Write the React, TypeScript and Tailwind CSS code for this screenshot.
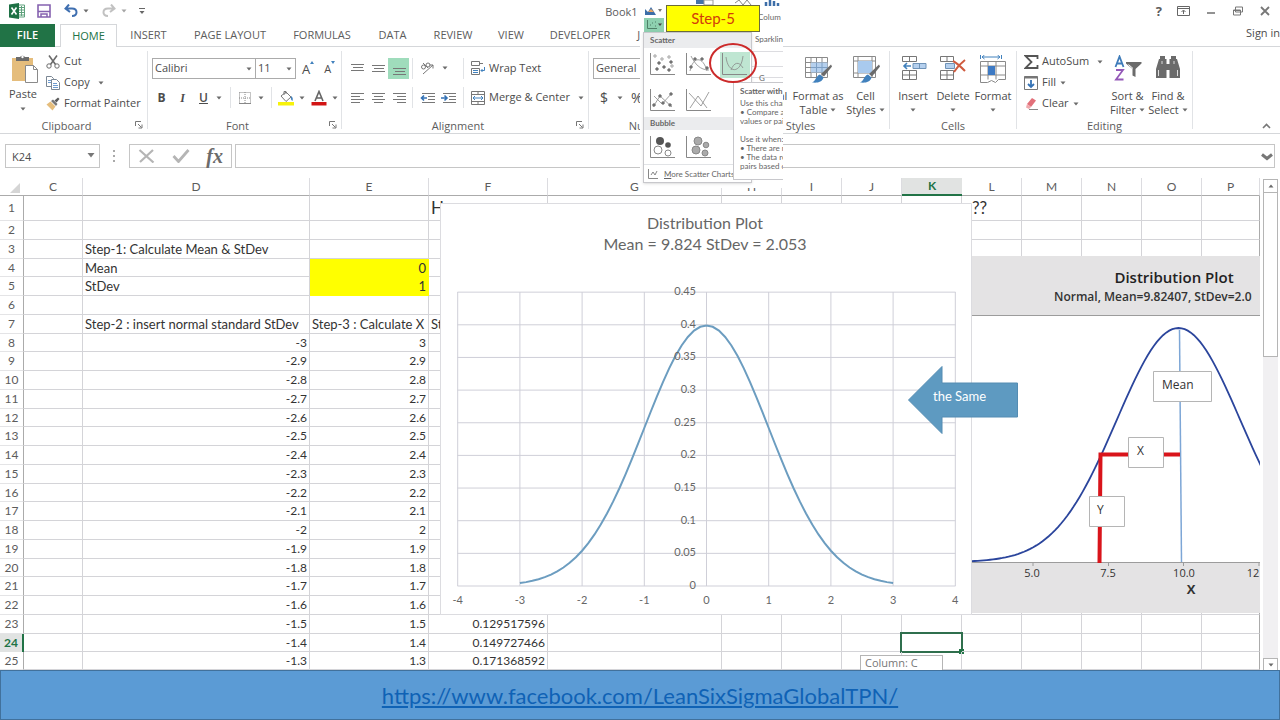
import React from "react";

const pdf = (z: number) => Math.exp((-z * z) / 2) / Math.sqrt(2 * Math.PI);

const Caret = ({ className = "" }) => (
  <svg viewBox="0 0 6 4" className={`w-[6px] h-1 shrink-0 ${className}`}>
    <path d="M0.5 0.5h5L3 3.5z" fill="#6b6b6b" />
  </svg>
);

const Launcher = () => (
  <svg viewBox="0 0 8 8" className="w-2 h-2" fill="none" stroke="#777">
    <path d="M0.5 5V0.5H6M3 3l3.500 3.500M7 3.500V7H3.500" />
  </svg>
);

/* ---------- Ribbon building blocks ---------- */

const Group = ({ label, width, launcher = false, children }) => (
  <section className={`relative flex flex-col shrink-0 my-1 border-r border-[#e1e3e6] ${width}`} aria-label={label}>
    <div className="h-[67px] shrink-0">{children}</div>
    <div className={`shrink-0 text-center text-[11px] leading-4 text-[#5c5c5c] ${launcher ? "pr-3.5" : ""}`}>{label}</div>
    {launcher && (
      <button aria-label={`${label} settings`} className="absolute right-1 bottom-0 leading-none">
        <Launcher />
      </button>
    )}
  </section>
);

const BigButton = ({ icon, lines, width }) => (
  <button className={`flex flex-col items-center shrink-0 pt-1 ${width}`}>
    {icon}
    <span className="mt-[3px] text-[11px] leading-[15px] whitespace-nowrap">{lines[0]}</span>
    <span className="flex items-center justify-center gap-[3px] h-[14px] text-[11px] leading-[14px] whitespace-nowrap">
      {lines[1]}
      <Caret />
    </span>
  </button>
);

const SmallButton = ({ icon, label, caret = "" }) => (
  <button className="flex items-center h-[21px] text-[11px] whitespace-nowrap">
    <span className="w-[18px] shrink-0">{icon}</span>
    {label}
    {caret && <Caret className={caret} />}
  </button>
);

const Lines = ({ rows, label }) => (
  <button aria-label={label} className="w-[21px] h-[21px] flex items-center justify-center shrink-0">
    <svg viewBox="0 0 14 14" className="w-[14px] h-[14px]" stroke="#777">
      {rows.map(([x1, x2, y]) => (
        <path key={y} d={`M${x1} ${y}H${x2}`} />
      ))}
    </svg>
  </button>
);

const Rule = () => <span className="block w-px h-[21px] bg-[#e1e3e6]" />;

/* ---------- Icons ---------- */

const PasteIcon = () => (
  <svg viewBox="0 0 28 30" className="w-7 h-[30px] ml-1">
    <path d="M1 4h21v23H1z" fill="#e5bd7c" />
    <path d="M5 7V3h4a3 3 0 0 1 5 0h4v4z" fill="#6b6b6b" />
    <circle cx="11.500" cy="3" r="1.200" fill="#fff" />
    <path d="M14.500 11.500h8l4 4V28.500h-12z" fill="#fff" stroke="#8a8a8a" />
    <path d="M22.500 11.500v4h4" fill="none" stroke="#8a8a8a" />
  </svg>
);

const CutIcon = () => (
  <svg viewBox="0 0 14 14" className="w-[14px] h-[14px]" fill="none" stroke="#6b6b6b">
    <path d="M3 0.500l6.500 9M11 0.500l-6.500 9" strokeWidth="1.600" />
    <circle cx="3" cy="11" r="2.200" />
    <circle cx="11" cy="11" r="2.200" />
  </svg>
);

const CopyIcon = () => (
  <svg viewBox="0 0 14 14" className="w-[14px] h-[14px]" fill="#fff" stroke="#7b8794">
    <path d="M0.500 0.500h5l2 2v8h-7z" />
    <path d="M5.500 3.500h5l3 3v7h-8z" />
    <path d="M2 4.500h3M2 6.500h3M7 7.500h4M7 9.500h5M7 11.500h5" stroke="#6d9bd0" />
  </svg>
);

const PainterIcon = () => (
  <svg viewBox="0 0 14 14" className="w-[14px] h-[14px]">
    <path d="M0.500 7.500l4-3 5 5-3 4z" fill="#e5bd7c" />
    <path d="M5 4l2-1.500 4.500 4.500-1.500 2z" fill="#777" />
    <path d="M8.500 3.500l3.500-3 1.500 1.500-3 3.500z" fill="#5c5c5c" />
  </svg>
);

const Brush = () => (
  <>
    <path d="M27 9.500l1 2-8 10-3-2.500z" fill="#6b6b6b" />
    <path d="M16 19.500l3.500 3c-1.500 5-6 5.500-11.500 5 4-1.500 4-7 8-8z" fill="#4181bd" />
  </>
);

const TableIcon = () => (
  <svg viewBox="0 0 28 30" className="w-7 h-[30px]">
    <path d="M1.500 2.500h22v20h-22zM1.500 7.500h22M1.500 12.500h22M1.500 17.500h22M7 2.500v20M12.500 2.500v20M18 2.500v20" fill="#fff" stroke="#8a8a8a" />
    <path d="M7 7.500h16.500v10H7z" fill="#b5d0ee" />
    <path d="M7 12.500h16.500M12.500 7.500v10M18 7.500v10" stroke="#7d9fc4" />
    <Brush />
  </svg>
);

const StylesIcon = () => (
  <svg viewBox="0 0 28 30" className="w-7 h-[30px]">
    <path d="M1.500 1.500h22v21h-22zM1.500 6h22M1.500 18h22M6 1.500v21M20 1.500v21" fill="#fff" stroke="#8a8a8a" />
    <path d="M6 6h14v12H6z" fill="#a9caee" />
    <Brush />
  </svg>
);

const InsertIcon = () => (
  <svg viewBox="0 0 28 30" className="w-7 h-[30px]" stroke="#777" fill="#fff">
    <path d="M3.500 1.500h14v5h-14zM10.500 1.500v5M3.500 15.500h14v9h-14zM3.500 20h14M10.500 15.500v9" />
    <path d="M14 8.500h13v5H14zM20.500 8.500v5" fill="#b5d0ee" stroke="#6f93b8" />
    <path d="M12 11H5M8 8l-3 3 3 3" stroke="#4181bd" strokeWidth="1.600" fill="none" />
  </svg>
);

const DeleteIcon = () => (
  <svg viewBox="0 0 28 30" className="w-7 h-[30px]" stroke="#777" fill="#fff">
    <path d="M1.500 1.500h13v5h-13zM8 1.500v5M1.500 15.500h13v9h-13zM1.500 20h13M8 15.500v9" />
    <path d="M6.500 8.500h9v5h-9z" fill="#b5d0ee" stroke="#6f93b8" />
    <path d="M14 6c4 2 8 6 12 10M26 5c-4 3-8 7-11 12" stroke="#cf5b3f" strokeWidth="2" fill="none" />
  </svg>
);

const FormatIcon = () => (
  <svg viewBox="0 0 28 30" className="w-7 h-[30px]" stroke="#8a8a8a" fill="#fff">
    <path d="M1.500 0v4M22.500 0v4M3 2h18M5.500 0l-2.500 2 2.500 2M18.500 0l2.500 2-2.500 2" stroke="#4181bd" fill="none" />
    <path d="M1.500 6.500h25v18h-7l-3 3-4-2-4 2h-7zM1.500 11h25M1.500 20h25M9 6.500v18M17 6.500v18" />
    <path d="M9 11h7v9H9z" fill="#3d7ac4" stroke="none" />
  </svg>
);

const SortIcon = () => (
  <svg viewBox="0 0 28 30" className="w-7 h-[30px]" fill="none">
    <path d="M1.500 12L5.500 1.500l4 10.500M3 8.500h5.500" stroke="#3f7cba" strokeWidth="1.800" />
    <path d="M2 15h7l-7 9.500h7.500" stroke="#9458b8" strokeWidth="1.800" />
    <path d="M12 7h15.500v1.500L21.500 14v8l-3-1.500V14L12 8.500z" fill="#6b6b6b" />
    <path d="M14.500 9.500l4.500 4" stroke="#fff" />
  </svg>
);

const FindIcon = () => (
  <svg viewBox="0 0 28 30" className="w-7 h-[30px]" fill="#6b6b6b">
    <path d="M6 1h5v3h1.500v19H2v-9l3-10h1zM17 1h5v3h1l3 10v9H15.500V4H17zM12 9h4v6h-4z" />
    <path d="M4.500 15v6M23.500 15v6M8 6v3M20 6v3" stroke="#ddd" />
  </svg>
);

/* ---------- Top of the window ---------- */

const TitleBar = () => (
  <header className="flex items-center h-6 text-[#5c5c5c]">
    <div className="flex items-center pl-[9px] pb-[3px]">
      <svg viewBox="0 0 16 16" className="w-4 h-4">
        <path d="M8 2h7.500v12H8z" fill="#fff" stroke="#5fa17c" />
        <path d="M10 4.500h5M10 7h5M10 9.500h5M10 12h5M12.500 3v10" stroke="#5fa17c" />
        <path d="M0 1.500L10 0v16L0 14.500z" fill="#1e7145" />
        <path d="M2.500 4.500l5 7M7.500 4.500l-5 7" stroke="#fff" strokeWidth="1.600" />
      </svg>
      <button aria-label="Save" className="ml-3">
        <svg viewBox="0 0 14 14" className="w-[14px] h-[14px]">
          <path d="M1 1h12v12H1z" fill="#fff" stroke="#8561b0" strokeWidth="1.600" />
          <path d="M1 7.500h12M4 13v-3h6v3" stroke="#8561b0" strokeWidth="1.500" fill="none" />
        </svg>
      </button>
      <button aria-label="Undo" className="flex items-center ml-[13px] gap-[5px]">
        <svg viewBox="0 0 14 13" className="w-[14px] h-[13px]" fill="none" stroke="#3f6fb0" strokeWidth="2">
          <path d="M5 0.500L1.500 4.500 6 8M2 4.500h6c6 0 6 7.500 0 7.500" />
        </svg>
        <Caret />
      </button>
      <button aria-label="Redo" className="flex items-center ml-[13px] gap-[5px] opacity-60">
        <svg viewBox="0 0 14 13" className="w-[14px] h-[13px]" fill="none" stroke="#999" strokeWidth="2">
          <path d="M9 0.500l3.500 4L8 8M12 4.500H6c-6 0-6 7.500 0 7.500" />
        </svg>
        <Caret />
      </button>
      <button aria-label="Customize toolbar" className="ml-3">
        <svg viewBox="0 0 6 8" className="w-[6px] h-2">
          <path d="M0 1.500h6" stroke="#666" />
          <path d="M0.500 4h5L3 7z" fill="#666" />
        </svg>
      </button>
    </div>
    <h1 className="flex-1 text-center text-[11px] pr-[58px]">Book1</h1>
    <div className="flex items-center gap-[15px] pr-[9px] pb-[3px]">
      <button className="text-[13px] leading-4 font-bold">?</button>
      <button aria-label="Ribbon display options">
        <svg viewBox="0 0 13 10" className="w-[13px] h-[10px]" fill="none" stroke="#666">
          <path d="M0.500 0.500h12v9H0.500zM0.500 2.500h12M6.500 8V4.500M4.500 6l2-2 2 2" />
        </svg>
      </button>
      <button aria-label="Minimize">
        <svg viewBox="0 0 12 10" className="w-3 h-[10px]">
          <path d="M2 7h8" stroke="#777" strokeWidth="1.600" />
        </svg>
      </button>
      <button aria-label="Restore">
        <svg viewBox="0 0 12 10" className="w-3 h-[10px]" fill="#fff" stroke="#777">
          <path d="M3.500 1h7v5h-7zM1.500 4h7v5h-7zM1.500 4.500h7" />
        </svg>
      </button>
      <button aria-label="Close">
        <svg viewBox="0 0 12 10" className="w-3 h-[10px]" stroke="#777" strokeWidth="1.800">
          <path d="M2 1l8 8M10 1l-8 8" />
        </svg>
      </button>
    </div>
  </header>
);

const tabs = [
  ["INSERT", "w-[63px]"],
  ["PAGE LAYOUT", "w-[100px]"],
  ["FORMULAS", "w-[84px]"],
  ["DATA", "w-[57px]"],
  ["REVIEW", "w-[64px]"],
  ["VIEW", "w-[52px]"],
  ["DEVELOPER", "w-[86px]"],
  ["JMP", "w-[48px]"],
];

const TabRow = () => (
  <nav className="flex h-[23px] border-b border-[#d5d7da] text-[11px] text-[#5c5c5c]">
    <button className="w-[55px] h-[23px] bg-[#217346] text-white font-semibold">FILE</button>
    <button className="w-[57px] h-[23px] ml-[5px] bg-white border border-b-0 border-[#d5d7da] text-[#217346]">HOME</button>
    {tabs.map(([name, width]) => (
      <button key={name} className={`shrink-0 whitespace-nowrap ${width}`}>
        {name}
      </button>
    ))}
    <a href="#signin" className="ml-auto leading-[18px] whitespace-nowrap text-[#4c4c4c]">
      Sign in
    </a>
  </nav>
);

const Ribbon = () => (
  <div className="flex h-[87px] border-b border-[#d5d7da] text-[#4c4c4c]">
    <Group label="Clipboard" width="w-[148px]" launcher>
      <div className="flex">
        <button className="flex flex-col items-center shrink-0 w-[46px] pt-[3px]">
          <PasteIcon />
          <span className="text-[11px] leading-[15px] mt-0.5">Paste</span>
          <Caret className="mt-1.5" />
        </button>
        <div className="flex flex-col">
          <SmallButton icon={<CutIcon />} label="Cut" />
          <SmallButton icon={<CopyIcon />} label="Copy" caret="ml-2" />
          <SmallButton icon={<PainterIcon />} label="Format Painter" />
        </div>
      </div>
    </Group>

    <Group label="Font" width="w-[194px]" launcher>
      <div className="flex items-center pl-1 pt-[7px]">
        <label className="relative">
          <select aria-label="Font name" className="appearance-none block w-[104px] h-[21px] border border-[#ababab] bg-white pl-0.5 text-[11px]">
            <option>Calibri</option>
          </select>
          <Caret className="absolute right-1 top-[9px]" />
        </label>
        <label className="relative">
          <select aria-label="Font size" className="appearance-none block w-[40px] h-[21px] border border-l-0 border-[#ababab] bg-white pl-0.5 text-[11px]">
            <option>11</option>
          </select>
          <Caret className="absolute right-1 top-[9px]" />
        </label>
        <button aria-label="Grow font" className="flex ml-1.5 text-[13px] leading-4">
          A<svg viewBox="0 0 4 3" className="w-1 h-[3px]"><path d="M0 3h4L2 0z" fill="#4181bd" /></svg>
        </button>
        <button aria-label="Shrink font" className="flex ml-2.5 text-[11px] leading-4">
          A<svg viewBox="0 0 4 3" className="w-1 h-[3px]"><path d="M0 0h4L2 3z" fill="#4181bd" /></svg>
        </button>
      </div>
      <div className="flex items-center pl-[9px] pt-2 h-[29px] text-xs">
        <button className="w-[9px] font-bold">B</button>
        <button className="w-[9px] ml-3 italic font-['Liberation_Serif',serif] font-bold">I</button>
        <button className="w-[9px] ml-3 underline font-semibold">U</button>
        <Caret className="ml-2 mr-2" />
        <Rule />
        <button aria-label="Borders" className="ml-2">
          <svg viewBox="0 0 12 12" className="w-3 h-3" stroke="#888" fill="none">
            <path d="M0.500 0.500h11v11M0.500 0.500v11M6 0v12M0 6h12" strokeDasharray="1 1" />
            <path d="M0 11.500h12" />
          </svg>
        </button>
        <Caret className="ml-[7px] mr-[7px]" />
        <Rule />
        <button aria-label="Fill color" className="ml-1.5">
          <svg viewBox="0 0 16 16" className="w-4 h-4">
            <path d="M3 6l5-4 5 5-5 4.500z" fill="#fff" stroke="#777" />
            <path d="M6 5V1.500h2V4" fill="none" stroke="#777" />
            <path d="M13 6c2 1 2 3 1.500 5-1.500-1-2-2-1.500-5z" fill="#4181bd" />
            <path d="M0 12h16v3.500H0z" fill="#f7f20a" />
          </svg>
        </button>
        <Caret className="ml-[5px]" />
        <button aria-label="Font color" className="ml-1.5">
          <svg viewBox="0 0 16 16" className="w-4 h-4">
            <path d="M4 11L8 1.500 12 11M5.500 8h5" fill="none" stroke="#666" strokeWidth="1.600" />
            <path d="M0.500 12h15v3.500h-15z" fill="#d21414" />
          </svg>
        </button>
        <Caret className="ml-[5px]" />
      </div>
    </Group>

    <Group label="Alignment" width="w-[247px]" launcher>
      <div className="flex items-center pl-1 pt-1.5 h-7">
        <Lines label="Top align" rows={[[1, 14, 3.5], [3, 13, 6.5], [1, 14, 9.5]]} />
        <Lines label="Middle align" rows={[[1, 14, 4.5], [3, 13, 7.5], [1, 14, 10.5]]} />
        <div className="bg-[#9fdcbc]">
          <Lines label="Bottom align" rows={[[1, 14, 7.5], [3, 13, 10.5], [1, 14, 13.5]]} />
        </div>
        <span className="ml-[3px]"><Rule /></span>
        <button aria-label="Orientation" className="flex items-center gap-1.5 ml-[7px]">
          <svg viewBox="0 0 16 14" className="w-4 h-[14px]" fill="none" stroke="#777">
            <path d="M3 13L13 4M13 4h-3.500M13 4v3.500" />
            <circle cx="3.500" cy="6" r="2" />
            <path d="M3 2l5 5" />
            <circle cx="8" cy="4" r="2" />
          </svg>
          <Caret />
        </button>
        <span className="ml-[15px]"><Rule /></span>
        <button className="flex items-center ml-1.5 gap-[3px] text-[11px] whitespace-nowrap">
          <svg viewBox="0 0 16 14" className="w-4 h-[14px]" fill="none" stroke="#777">
            <path d="M1.500 0.500h8v4h-8zM1.500 7.500h8v6h-8zM9 2.500h4" />
            <path d="M3 9.500h5M3 11.500h5M14.500 6v3.500H11M12.500 8L11 9.500l1.500 1.500" stroke="#4181bd" />
          </svg>
          Wrap Text
        </button>
      </div>
      <div className="flex items-center pl-1 pt-2 h-[29px]">
        <Lines label="Align left" rows={[[1, 14, 2.5], [1, 10, 5.5], [1, 14, 8.5], [1, 10, 11.5]]} />
        <Lines label="Center" rows={[[1, 14, 2.5], [3, 12, 5.5], [1, 14, 8.5], [3, 12, 11.5]]} />
        <Lines label="Align right" rows={[[1, 14, 2.5], [5, 14, 5.5], [1, 14, 8.5], [5, 14, 11.5]]} />
        <span className="ml-[3px]"><Rule /></span>
        <button aria-label="Decrease indent" className="ml-[7px]">
          <svg viewBox="0 0 16 12" className="w-4 h-3" stroke="#777" fill="none">
            <path d="M2 1.500h13M8 4.500h7M8 7.500h7M2 10.500h13" />
            <path d="M7 6H1.500M4 3.500L1.500 6 4 8.500" stroke="#3472b5" strokeWidth="1.600" />
          </svg>
        </button>
        <button aria-label="Increase indent" className="ml-[5px]">
          <svg viewBox="0 0 16 12" className="w-4 h-3" stroke="#777" fill="none">
            <path d="M2 1.500h13M8 4.500h7M8 7.500h7M2 10.500h13" />
            <path d="M0 6h6M3.500 3.500L6 6 3.500 8.500" stroke="#3472b5" strokeWidth="1.600" />
          </svg>
        </button>
        <span className="ml-1.5"><Rule /></span>
        <button className="flex items-center ml-1.5 text-[11px] whitespace-nowrap">
          <svg viewBox="0 0 16 14" className="w-4 h-[14px] mr-[3px]" fill="none" stroke="#777">
            <path d="M1.500 0.500h13v13h-13zM1.500 3.500h13M1.500 10.500h13M8 0.500v3M8 10.500v3" />
            <path d="M3 7h10M5 5L3 7l2 2M11 5l2 2-2 2" stroke="#4181bd" />
          </svg>
          Merge &amp; Center
          <Caret className="ml-2" />
        </button>
      </div>
    </Group>

    <Group label="Number" width="w-[123px]">
      <div className="pl-1 pt-[7px]">
        <select aria-label="Number format" className="appearance-none block w-[90px] h-[21px] border border-[#ababab] bg-white pl-0.5 text-[11px]">
          <option>General</option>
        </select>
      </div>
      <div className="flex items-center pl-[11px] pt-2 h-[29px] text-sm">
        <button>$</button>
        <Caret className="ml-[9px] mr-2" />
        <button>%</button>
      </div>
    </Group>

    <Group label="Styles" width="w-[178px]">
      <div className="flex justify-end">
        <BigButton icon={<TableIcon />} lines={["Conditional", ""]} width="w-[64px] mr-1" />
        <BigButton icon={<TableIcon />} lines={["Format as", "Table"]} width="w-[48px]" />
        <BigButton icon={<StylesIcon />} lines={["Cell", "Styles"]} width="w-[47px]" />
      </div>
    </Group>

    <Group label="Cells" width="w-[127px]">
      <div className="flex pl-[3px]">
        <BigButton icon={<InsertIcon />} lines={["Insert", ""]} width="w-10" />
        <BigButton icon={<DeleteIcon />} lines={["Delete", ""]} width="w-10" />
        <BigButton icon={<FormatIcon />} lines={["Format", ""]} width="w-10" />
      </div>
    </Group>

    <Group label="Editing" width="w-[176px]">
      <div className="flex pl-[7px]">
        <div className="flex flex-col w-[83px] shrink-0">
          <SmallButton
            icon={
              <svg viewBox="0 0 15 14" className="w-[15px] h-[14px]">
                <path d="M13.500 4V1H1.500l6 6-6 6h12v-3" fill="none" stroke="#555" strokeWidth="1.800" />
              </svg>
            }
            label="AutoSum"
            caret="ml-2"
          />
          <SmallButton
            icon={
              <svg viewBox="0 0 14 14" className="w-[14px] h-[14px]">
                <path d="M0.500 0.500h13v13H0.500z" fill="#fff" stroke="#777" />
                <path d="M0.500 0.500h13v2H0.500z" fill="#777" />
                <path d="M7 4v7M4 8l3 3 3-3" fill="none" stroke="#3472b5" strokeWidth="1.800" />
              </svg>
            }
            label="Fill"
            caret="ml-1"
          />
          <SmallButton
            icon={
              <svg viewBox="0 0 14 14" className="w-[14px] h-[14px]">
                <path d="M3 7l5-6 4 2.500-5 6.500z" fill="#e2707a" />
                <path d="M3 7l4 3-2 2-3-1.500z" fill="#f0a9ae" />
                <path d="M5 12.500h9" stroke="#888" />
              </svg>
            }
            label="Clear"
            caret="ml-1"
          />
        </div>
        <BigButton icon={<SortIcon />} lines={["Sort &", "Filter"]} width="w-[41px]" />
        <BigButton icon={<FindIcon />} lines={["Find &", "Select"]} width="w-10" />
      </div>
    </Group>

    <button aria-label="Collapse ribbon" className="ml-auto self-end mr-[9px] mb-1">
      <svg viewBox="0 0 9 6" className="w-[9px] h-1.5" fill="none" stroke="#777" strokeWidth="1.600">
        <path d="M1 5l3.500-3.500L8 5" />
      </svg>
    </button>
  </div>
);

const FormulaBar = () => (
  <div className="flex py-2.5 pl-[5px] pr-[5px] text-[#4c4c4c]">
    <label className="relative">
      <input aria-label="Name box" defaultValue="K24" className="block w-[95px] h-6 border border-[#c6c6c6] pl-1.5 text-[11px]" />
      <svg viewBox="0 0 8 5" className="absolute right-[5px] top-[9px] w-2 h-[5px]">
        <path d="M0.500 0h7L4 4.500z" fill="#777" />
      </svg>
    </label>
    <svg viewBox="0 0 3 12" className="w-[3px] h-3 mx-[13px] self-center" fill="#aaa">
      <path d="M0 0h2v2H0zM0 5h2v2H0zM0 10h2v2H0z" />
    </svg>
    <div className="flex items-center justify-between w-[103px] h-6 border border-[#c6c6c6] pl-2 pr-2">
      <button aria-label="Cancel">
        <svg viewBox="0 0 17 14" className="w-[17px] h-[14px]" stroke="#b5b5b5" strokeWidth="2.200">
          <path d="M1.500 1l14 12.500M15 1L2 13" />
        </svg>
      </button>
      <button aria-label="Enter">
        <svg viewBox="0 0 18 14" className="w-[18px] h-[14px]" fill="none" stroke="#b5b5b5" strokeWidth="2.800">
          <path d="M1.500 7l5 5.500L16.500 1" />
        </svg>
      </button>
      <button className="font-['Liberation_Serif',serif] italic font-bold text-[20px] leading-5 text-[#6b6b6b]">fx</button>
    </div>
    <div className="relative flex-1 ml-[3px]">
      <input aria-label="Formula" className="block w-full h-6 border border-[#c6c6c6] pr-6" />
      <svg viewBox="0 0 12 8" className="absolute right-0.5 top-[9px] w-3 h-2" fill="none" stroke="#777" strokeWidth="3">
        <path d="M1 1.500l5 4 5-4" />
      </svg>
    </div>
  </div>
);

/* ---------- Worksheet ---------- */

const columns = [
  ["C", "w-[59px]"],
  ["D", "w-[227px]"],
  ["E", "w-[119px]"],
  ["F", "w-[119px]"],
  ["G", "w-[174px]"],
  ["H", "w-[60px]"],
  ["I", "w-[60px]"],
  ["J", "w-[60px]"],
  ["K", "w-[60px]"],
  ["L", "w-[60px]"],
  ["M", "w-[60px]"],
  ["N", "w-[60px]"],
  ["O", "w-[60px]"],
  ["P", ""],
];

const texts: Record<string, string> = {
  D3: "Step-1: Calculate Mean & StDev",
  D4: "Mean",
  D5: "StDev",
  D7: "Step-2 : insert normal standard StDev",
  E4: "0",
  E5: "1",
  E7: "Step-3 : Calculate X",
  F1: "H",
  F7: "St",
  L1: "??",
};

// rows 8 and down hold z, the X distance and the density
const cellValue = (col: string, row: number) => {
  if (row < 8) return texts[col + row] ?? "";
  const z = (row - 38) / 10;
  if (col === "D") return String(z);
  if (col === "E") return String(-z);
  if (col === "F") return pdf(z).toFixed(9);
  return "";
};

const rowHeight = (row: number) => {
  if (row === 1) return "h-[25px]";
  return row % 4 === 0 || row === 25 ? "h-[18px]" : "h-[19px]";
};

const cellStyle = (col: string, row: number) => {
  const out = [];
  if (row >= 8 || (col === "E" && row < 6)) out.push("text-right");
  if (col === "E" && (row === 4 || row === 5)) out.push("bg-[#ffff00] border-[#ffff00]");
  else if (col === "P") out.push("border-b-[#d4d4d8] border-r-[#ababab]");
  else out.push("border-[#d4d4d8]");
  if (row === 1) out.push("text-[17px]");
  else if (row < 8) out.push("text-[13px]");
  if (col === "L") out.push("pl-2.5");
  return out.join(" ");
};

const SheetTable = () => (
  <table className="w-full table-fixed border-separate border-spacing-0 text-xs leading-4">
    <colgroup>
      <col className="w-6" />
      {columns.map(([name, width]) => (
        <col key={name} className={width} />
      ))}
    </colgroup>
    <thead>
      <tr className="h-[18px] text-[#5c5c5c]">
        <th className="p-0 border-b border-[#ababab]">
          <svg viewBox="0 0 24 16" className="block w-6 h-4">
            <path d="M20 4v10H10z" fill="#d5d5d5" />
          </svg>
        </th>
        {columns.map(([name]) => (
          <th
            key={name}
            className={
              name === "K"
                ? "p-0 font-bold text-[#217346] bg-[#e1e3e2] border-b-2 border-[#217346]"
                : "p-0 font-normal border-b border-b-[#ababab] border-r border-r-[#dcdce0]"
            }>
            {name}
          </th>
        ))}
      </tr>
    </thead>
    <tbody className="text-[#333]">
      {Array.from({ length: 25 }, (_, i) => i + 1).map((row) => (
        <tr key={row} className={rowHeight(row)}>
          <th
            className={
              row === 24
                ? "p-0 font-bold text-[#217346] bg-[#e1e3e2] border-r-2 border-[#217346]"
                : "p-0 font-normal text-[#5c5c5c] border-b border-b-[#e4e4e6] border-r border-r-[#ababab]"
            }>
            {row}
          </th>
          {columns.map(([col]) => (
            <td key={col} className={`relative py-0 px-0.5 border-r border-b whitespace-nowrap ${cellStyle(col, row)}`}>
              {cellValue(col, row)}
              {col === "K" && row === 24 && (
                <span className="absolute -inset-x-0.5 -inset-y-0.5 border-2 border-[#2f6f4d]">
                  <span className="absolute -right-[3px] -bottom-[3px] w-[5px] h-[5px] bg-[#217346]" />
                </span>
              )}
            </td>
          ))}
        </tr>
      ))}
    </tbody>
  </table>
);

const bell = Array.from({ length: 61 }, (_, i) => -3 + i / 10);
const plotX = (x: number) => 266.5 + x * 62.2;
const plotY = (y: number) => 383 - y * 653;

const ExcelChart = () => (
  <svg viewBox="0 0 532 413" className="absolute left-[440px] top-[25px] w-[532px] h-[413px]" fill="#666">
    <path d="M0.500 0.500h531v411H0.500z" fill="#fff" stroke="#dcdce0" />
    <g stroke="#cfcfd8">
      {[-4, -3, -2, -1, 0, 1, 2, 3, 4].map((x) => (
        <path key={x} d={`M${plotX(x)} 89V383`} />
      ))}
      {[0, 1, 2, 3, 4, 5, 6, 7, 8, 9].map((n) => (
        <path key={n} d={`M17.500 ${plotY(n * 0.05)}H515.500`} />
      ))}
    </g>
    <path d={"M" + bell.map((x) => `${plotX(x)} ${plotY(pdf(x))}`).join("L")} fill="none" stroke="#6c9dc0" strokeWidth="2" />
    <g fontSize="16" textAnchor="middle">
      <text x="265" y="26">Distribution Plot</text>
      <text x="265" y="47">Mean = 9.824 StDev = 2.053</text>
    </g>
    <g fontSize="11" textAnchor="end">
      {[0, 0.05, 0.1, 0.15, 0.2, 0.25, 0.3, 0.35, 0.4, 0.45].map((y) => (
        <text key={y} x="256" y={plotY(y) + 3}>{y}</text>
      ))}
    </g>
    <g fontSize="11" textAnchor="middle">
      {[-4, -3, -2, -1, 0, 1, 2, 3, 4].map((x) => (
        <text key={x} x={plotX(x)} y="401">{x}</text>
      ))}
    </g>
  </svg>
);

const wideBell = Array.from({ length: 100 }, (_, i) => -3.4 + i / 20);

const MinitabChart = () => (
  <svg viewBox="0 0 288 357" className="absolute left-[972px] top-[78px] w-[288px] h-[357px] font-['Open_Sans',sans-serif]" fill="#333">
    <path d="M0 0h288v357H0z" fill="#e4e3e4" />
    <path d="M0 59h288v247H0z" fill="#fff" />
    <path d="M0 59.500H288M0 306.500H288M61 306v4M136.500 306v4M211.500 306v4M287 306v4" stroke="#9c9c9c" />
    <path d="M207.500 74L209.500 306" stroke="#7da6d6" strokeWidth="1.500" />
    <path
      d={"M" + wideBell.map((z) => `${206.5 + z * 61.8} ${306 - pdf(z) * 586.5}`).join("L")}
      fill="none"
      stroke="#2b459c"
      strokeWidth="1.800"
    />
    <path d="M127.500 307L128.500 198.500H208" fill="none" stroke="#d9141b" strokeWidth="4" />
    <g fill="#fff" stroke="#b5b5b5">
      <path d="M181.500 115.500h58v30h-58zM156.500 181.500h35v30h-35zM117.500 240.500h35v30h-35z" />
    </g>
    <text x="202" y="27" fontSize="15" fontWeight="600" textAnchor="middle" fill="#222">Distribution Plot</text>
    <text x="82" y="45" fontSize="12" fontWeight="600">Normal, Mean=9.82407, StDev=2.0</text>
    <g fontSize="12">
      <text x="190" y="133">Mean</text>
      <text x="165" y="199">X</text>
      <text x="125" y="258">Y</text>
    </g>
    <g fontSize="11" textAnchor="middle">
      <text x="60" y="321">5.0</text>
      <text x="136" y="321">7.5</text>
      <text x="212" y="321">10.0</text>
      <text x="281" y="321">12</text>
    </g>
    <text x="219" y="338" fontSize="13" fontWeight="700" textAnchor="middle">X</text>
  </svg>
);

const SameArrow = () => (
  <svg viewBox="0 0 110 68" className="absolute left-[908px] top-[188px] w-[110px] h-[68px]">
    <path d="M0.500 34L34 0.500V17h75.500v34H34v16.500z" fill="#5e9ac1" stroke="#548cb2" />
    <text x="25" y="35" fontSize="13" fill="#fff">the Same</text>
  </svg>
);

const ScrollBar = () => (
  <div className="flex flex-col w-5 shrink-0 pl-[3px] pr-0.5 pt-px">
    <button aria-label="Scroll up" className="flex items-center justify-center h-[14px] border border-[#b5b5b5]">
      <Caret className="rotate-180" />
    </button>
    <div className="h-[164px] bg-white border border-t-0 border-[#b5b5b5]" />
    <div className="flex-1 bg-[#f1f0f2]" />
    <button aria-label="Scroll down" className="flex items-center justify-center h-3 border border-b-0 border-[#b5b5b5]">
      <Caret />
    </button>
  </div>
);

/* ---------- Chart menu pasted over the ribbon ---------- */

const Axes = ({ children, label }) => (
  <button aria-label={label} className="block w-[26px] h-6">
    <svg viewBox="0 0 26 24" className="w-[26px] h-6" fill="none" stroke="#888">
      <path d="M0.500 1v21.500H25" />
      {children}
    </svg>
  </button>
);

const Dots = ({ points, r = 1.3 }) => points.map(([x, y]) => <circle key={`${x}-${y}`} cx={x} cy={y} r={r} fill="#555" />);

const tip = ["Use this char", "• Compare a", "values or pai", "", "Use it when:", "• There are n", "• The data re", "pairs based o"];

const ChartMenu = () => (
  <div className="absolute left-[640px] top-0 w-[143px] h-[188px] bg-white overflow-hidden font-['Lato',sans-serif] text-[8px] text-[#666]">
    <svg viewBox="0 0 143 90" className="absolute left-0 top-0 w-[143px] h-[90px]">
      <path d="M56 0h10v4H56z" fill="#4472a8" />
      <path d="M64 0h9v5h-9z" fill="#fff" stroke="#999" />
      <path d="M95 3l4-3 4 5 4-5 4 5" fill="none" stroke="#888" />
      <path d="M126 2v4M130 0v6M134 1v5M138 3v3" stroke="#3d6ea8" strokeWidth="2.500" />
      <path d="M5 15V9l3 3 3-5 5 8z" fill="#3d6ea8" />
      <path d="M8 12l3-3 3 3z" fill="#e5a566" />
      <path d="M18 9h4l-2 3z" fill="#777" />
      <path d="M4 18h20v14H4z" fill="#8ed0b0" />
      <path d="M7.500 20v8.500H17M10 25h1M12 23h1M15 26h1M15 22h1" fill="none" stroke="#4f8068" />
      <path d="M18 23.500h4l-2 2.500z" fill="#444" />
      <path d="M112 51.500h31M112 66.500h31M112 77.500h31" stroke="#dcdce0" />
    </svg>
    <span className="absolute left-[118px] top-3 leading-[10px]">Colum</span>
    <span className="absolute left-[115px] top-[34px] leading-[10px]">Sparklin</span>
    <span className="absolute left-[119px] top-[73px] leading-[10px]">G</span>

    <div className="absolute left-[3px] top-8 w-[109px] h-[151px] bg-white border border-[#c8c8cc] shadow">
      <div className="h-[15px] bg-[#ebecee] pl-1.5 font-bold leading-[15px]">Scatter</div>
      <div className="flex flex-wrap content-start gap-2.5 pl-1.5 pt-1 h-[69px]">
        <Axes label="Scatter">
          <Dots points={[[9, 11], [7, 17], [14, 15], [19, 18], [21, 10]]} />
          <g strokeWidth="0.800">
            <circle cx="5" cy="4" r="1.200" />
            <circle cx="12" cy="7" r="1.200" />
            <circle cx="19" cy="5" r="1.200" />
            <circle cx="22" cy="14" r="1.200" />
          </g>
        </Axes>
        <Axes label="Smooth lines and markers">
          <path d="M4 19C7 4 17 4 21 19M5 4c4 8 9 14 18 14" strokeWidth="0.800" />
          <Dots points={[[5, 15], [9, 7], [16, 7], [21, 16]]} />
        </Axes>
        <span className="block w-[30px] h-[26px] -ml-0.5 pl-0.5 bg-[#bfe6d2]">
          <Axes label="Smooth lines">
            <path d="M4 5c2 17 15 17 17-1M9 18c3-8 8-9 12-2" strokeWidth="0.800" />
          </Axes>
        </span>
        <Axes label="Straight lines and markers">
          <path d="M3 19L10 8l12 11M4 8l8 8L22 5" strokeWidth="0.800" />
          <Dots points={[[4, 17], [10, 8], [13, 15], [21, 6], [20, 17]]} />
        </Axes>
        <Axes label="Straight lines">
          <path d="M3 5l12 13L23 4M4 20l8-12 9 12" strokeWidth="0.800" />
        </Axes>
      </div>
      <div className="h-[13px] bg-[#ebecee] pl-1.5 font-bold leading-[13px]">Bubble</div>
      <div className="flex gap-2.5 pl-1.5 pt-[5px] h-[34px]">
        <Axes label="Bubble">
          <circle cx="10" cy="6" r="4" fill="#555" stroke="none" />
          <circle cx="18" cy="10" r="2.800" fill="#555" stroke="none" />
          <circle cx="8" cy="15" r="4" />
          <circle cx="18" cy="18" r="3" />
        </Axes>
        <Axes label="3-D bubble">
          <g fill="#aaa">
            <circle cx="12" cy="6" r="4" />
            <circle cx="20" cy="10" r="2.800" />
            <circle cx="10" cy="15" r="4" />
            <circle cx="19" cy="18" r="3" />
          </g>
        </Axes>
      </div>
      <button className="flex items-center gap-1.5 w-full h-[18px] pl-1 border-t border-[#e1e3e6] whitespace-nowrap">
        <svg viewBox="0 0 10 10" className="w-[10px] h-[10px]" fill="none" stroke="#888">
          <path d="M0.500 0v9.500H10M3 6l2-3 2 3 2-4" />
        </svg>
        <span><u>M</u>ore Scatter Charts.</span>
      </button>
    </div>

    <div className="absolute left-[93px] top-[82px] w-[60px] h-[98px] bg-white border border-[#c8c8cc] pl-1.5 pt-[3px] leading-[9px] whitespace-nowrap">
      <p className="font-bold leading-[10px] mb-[3px]">Scatter with</p>
      {tip.map((line, i) => (
        <p key={i} className="h-[9px]">{line}</p>
      ))}
    </div>

    <div className="absolute left-[26px] top-[5px] w-[94px] h-[27px] bg-[#ffff00] border border-[#6b6b3a] text-center text-[15px] leading-[25px] text-[#d23c0a]">Step-5</div>
    <div className="absolute left-[69px] top-[43px] w-[48px] h-[40px] rounded-[50%] border-2 border-[#cc2a2a]" />
  </div>
);

const App = () => (
  <div className="relative flex flex-col min-h-screen bg-white overflow-x-hidden font-['Open_Sans','Noto_Sans',sans-serif]">
    <TitleBar />
    <TabRow />
    <Ribbon />
    <FormulaBar />
    <main className="flex flex-1 font-['Lato',sans-serif]">
      <div className="relative flex-1 overflow-hidden">
        <SheetTable />
        <ExcelChart />
        <MinitabChart />
        <SameArrow />
        <div className="absolute left-[860px] bottom-0 w-[83px] h-[15px] bg-white border border-b-0 border-[#b5b5b5] pl-1 text-[11px] leading-[14px] text-[#777] font-['Open_Sans',sans-serif]">Column: C</div>
      </div>
      <ScrollBar />
    </main>
    <footer className="flex items-center justify-center h-[50px] border border-[#41719c] bg-[#5b9bd5] font-['Lato',sans-serif]">
      <a href="https://www.facebook.com/LeanSixSigmaGlobalTPN/" className="text-[22px] text-[#0f62b5] underline">
        https://www.facebook.com/LeanSixSigmaGlobalTPN/
      </a>
    </footer>
    <ChartMenu />
  </div>
);

export default App;
